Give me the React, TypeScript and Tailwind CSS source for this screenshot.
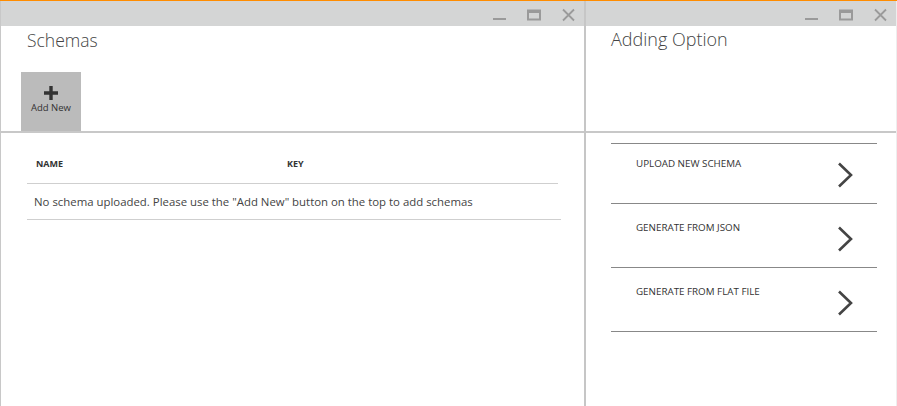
import React from "react";

const font = { fontFamily: '"Open Sans", "Noto Sans", sans-serif' };

function WindowControls() {
  return (
    <div className="flex h-[25px] items-start justify-end bg-[#d4d5d5]">
      {/* minimize */}
      <svg width="13" height="20" viewBox="0 0 13 20" className="mt-[1px]">
        <rect x="0" y="16" width="13" height="2" fill="#9a9a9a" />
      </svg>
      {/* maximize */}
      <svg width="14" height="20" viewBox="0 0 14 20" className="ml-[21px] mt-[1px]">
        <rect x="1" y="8.5" width="12" height="9" fill="none" stroke="#9a9a9a" strokeWidth="2" />
        <rect x="0" y="8" width="14" height="3" fill="#9a9a9a" />
      </svg>
      {/* close */}
      <svg width="13" height="20" viewBox="0 0 13 20" className="ml-[21px] mr-[9px] mt-[1px]">
        <path d="M1 7.5 L12 18.5 M12 7.5 L1 18.5" stroke="#9a9a9a" strokeWidth="1.8" />
      </svg>
    </div>
  );
}

function Chevron() {
  return (
    <svg width="16" height="26" viewBox="0 0 16 26">
      <path d="M2 1.5 L14 13 L2 24.5" fill="none" stroke="#444" strokeWidth="2.6" />
    </svg>
  );
}

const options = ["UPLOAD NEW SCHEMA", "GENERATE FROM JSON", "GENERATE FROM FLAT FILE"];

export default function App() {
  return (
    <div style={font} className="flex h-[406px] w-[897px] overflow-hidden border-t border-[#ff8c00] bg-white text-[#444]">
      {/* left panel */}
      <div className="flex w-[584px] flex-col border-l border-[#c8c8c8]">
        <WindowControls />
        <div className="relative h-[105px]">
          <h1 className="pl-[26px] pt-[2px] text-[17.5px] font-light leading-[24px] text-[#444]">Schemas</h1>
          <button className="absolute bottom-0 left-[20px] flex h-[59px] w-[60px] flex-col items-center bg-[#bbbbbb] pt-[14px]">
            <svg width="14" height="14" viewBox="0 0 14 14">
              <path d="M7 0 V14 M0 7 H14" stroke="#333" strokeWidth="3.4" />
            </svg>
            <span className="mt-[2px] text-[9.5px] leading-[12px] text-[#333]">Add New</span>
          </button>
        </div>
        <div className="h-[2px] bg-[#c8c8c8]" />
        <div className="px-[26px] pt-[11px]">
          <div className="flex h-[40px] items-center border-b border-[#cfcfcf] text-[9px] font-bold text-[#333]">
            <span className="w-[260px] pl-[9px]">NAME</span>
            <span>KEY</span>
          </div>
          <div className="flex h-[36px] w-[534px] items-center border-b border-[#cfcfcf] pl-[7px] text-[11.4px] text-[#444]">
            No schema uploaded. Please use the "Add New" button on the top to add schemas
          </div>
        </div>
      </div>

      {/* divider */}
      <div className="w-[2px] bg-[#c6c6c6]" />

      {/* right panel */}
      <div className="flex flex-1 flex-col border-r border-[#eeeeee]">
        <WindowControls />
        <div className="h-[105px]">
          <h1 className="pl-[25px] pt-[1px] text-[18px] font-light leading-[24px] text-[#444]">Adding Option</h1>
        </div>
        <div className="h-[2px] bg-[#c8c8c8]" />
        <div className="ml-[25px] mr-[19px] mt-[10px]">
          <div className="border-t border-[#888]" />
          {options.map((label, i) => (
            <div
              key={label}
              className={`flex items-start justify-between border-b border-[#888] pl-[25px] pr-[24px] ${
                i === 0 ? "h-[60px] pt-[14px]" : "h-[64px] pt-[18px]"
              }`}
            >
              <span className="text-[9.8px] font-medium leading-[12px] text-[#333]">{label}</span>
              <span className="mt-[4px]">
                <Chevron />
              </span>
            </div>
          ))}
        </div>
      </div>
    </div>
  );
}
